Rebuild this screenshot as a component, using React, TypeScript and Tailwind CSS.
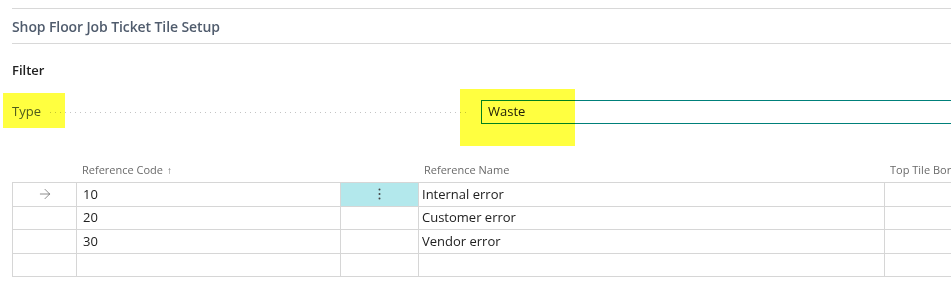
import { ArrowRight } from "lucide-react";

const rows = [
  { code: "10", name: "Internal error", active: true },
  { code: "20", name: "Customer error" },
  { code: "30", name: "Vendor error" },
  { code: "", name: "" },
];

const cols = "grid grid-cols-[64px_264px_78px_466px_120px]";

export default function App() {
  return (
    <div className="relative w-[951px] h-[289px] overflow-hidden bg-white font-['Open_Sans','Noto_Sans',sans-serif] text-[#212121]">
      {/* page header */}
      <div className="pt-2 pl-3">
        <div className="border-t border-[#d8d8d8] h-[35px] flex items-center">
          <h1 className="text-[14px] font-semibold text-[#505c6d] tracking-[-0.1px]">Shop Floor Job Ticket Tile Setup</h1>
        </div>
        <div className="border-t border-[#d8d8d8]" />
      </div>

      {/* filter */}
      <div className="pl-3 pt-[17px]">
        <div className="text-[13px] font-semibold leading-[18px] text-[#212121]">Filter</div>
        <div className="mt-[21px] flex items-center h-6">
          <span className="text-[13px] text-[#505c6d] w-9 shrink-0">Type</span>
          <div className="ml-0.5 w-[418px] shrink-0 h-px bg-[linear-gradient(to_right,#c4c4c4_1px,transparent_1px)] bg-[length:5px_1px] bg-repeat-x" />
          <div className="ml-[13px] w-[500px] shrink-0 h-6 border border-[#00807a] flex items-center pl-[6px] text-[13px]">Waste</div>
        </div>
      </div>

      {/* list */}
      <div className="pl-3 pt-[34px]">
        <div className={`${cols} h-6 items-center text-[11px] text-[#6a6a6a]`}>
          <div />
          <div className="pl-[6px] flex items-center gap-1">
            Reference Code <span className="text-[10px] leading-none">↑</span>
          </div>
          <div />
          <div className="pl-[6px]">Reference Name</div>
          <div className="pl-[6px] whitespace-nowrap">Top Tile Border Color</div>
        </div>
        <div className="border-t border-l border-[#d6d6d6] w-[1000px]">
          {rows.map((r, i) => (
            <div key={i} className={`${cols} h-[23.5px] border-b border-[#d6d6d6] text-[13px]`}>
              <div className="border-r border-[#d6d6d6] flex items-center justify-center text-[#555]">
                {r.active && <ArrowRight size={16} strokeWidth={1} />}
              </div>
              <div className="border-r border-[#d6d6d6] flex items-center pl-[6px]">{r.code}</div>
              <div className={`border-r border-[#d6d6d6] flex items-center justify-center ${r.active ? "bg-[#b3e8ec]" : ""}`}>
                {r.active && (
                  <svg width="3" height="12" viewBox="0 0 3 12" className="fill-[#444]">
                    <circle cx="1.5" cy="1.5" r="1" />
                    <circle cx="1.5" cy="6" r="1" />
                    <circle cx="1.5" cy="10.5" r="1" />
                  </svg>
                )}
              </div>
              <div className="border-r border-[#d6d6d6] flex items-center pl-[3px]">{r.name}</div>
              <div />
            </div>
          ))}
        </div>
      </div>

      {/* highlight marks */}
      <div className="absolute left-[3px] top-[93px] w-[62px] h-[35px] bg-[#ffff40] mix-blend-multiply pointer-events-none" />
      <div className="absolute left-[460px] top-[89px] w-[115px] h-[57px] bg-[#ffff40] mix-blend-multiply pointer-events-none" />
    </div>
  );
}
